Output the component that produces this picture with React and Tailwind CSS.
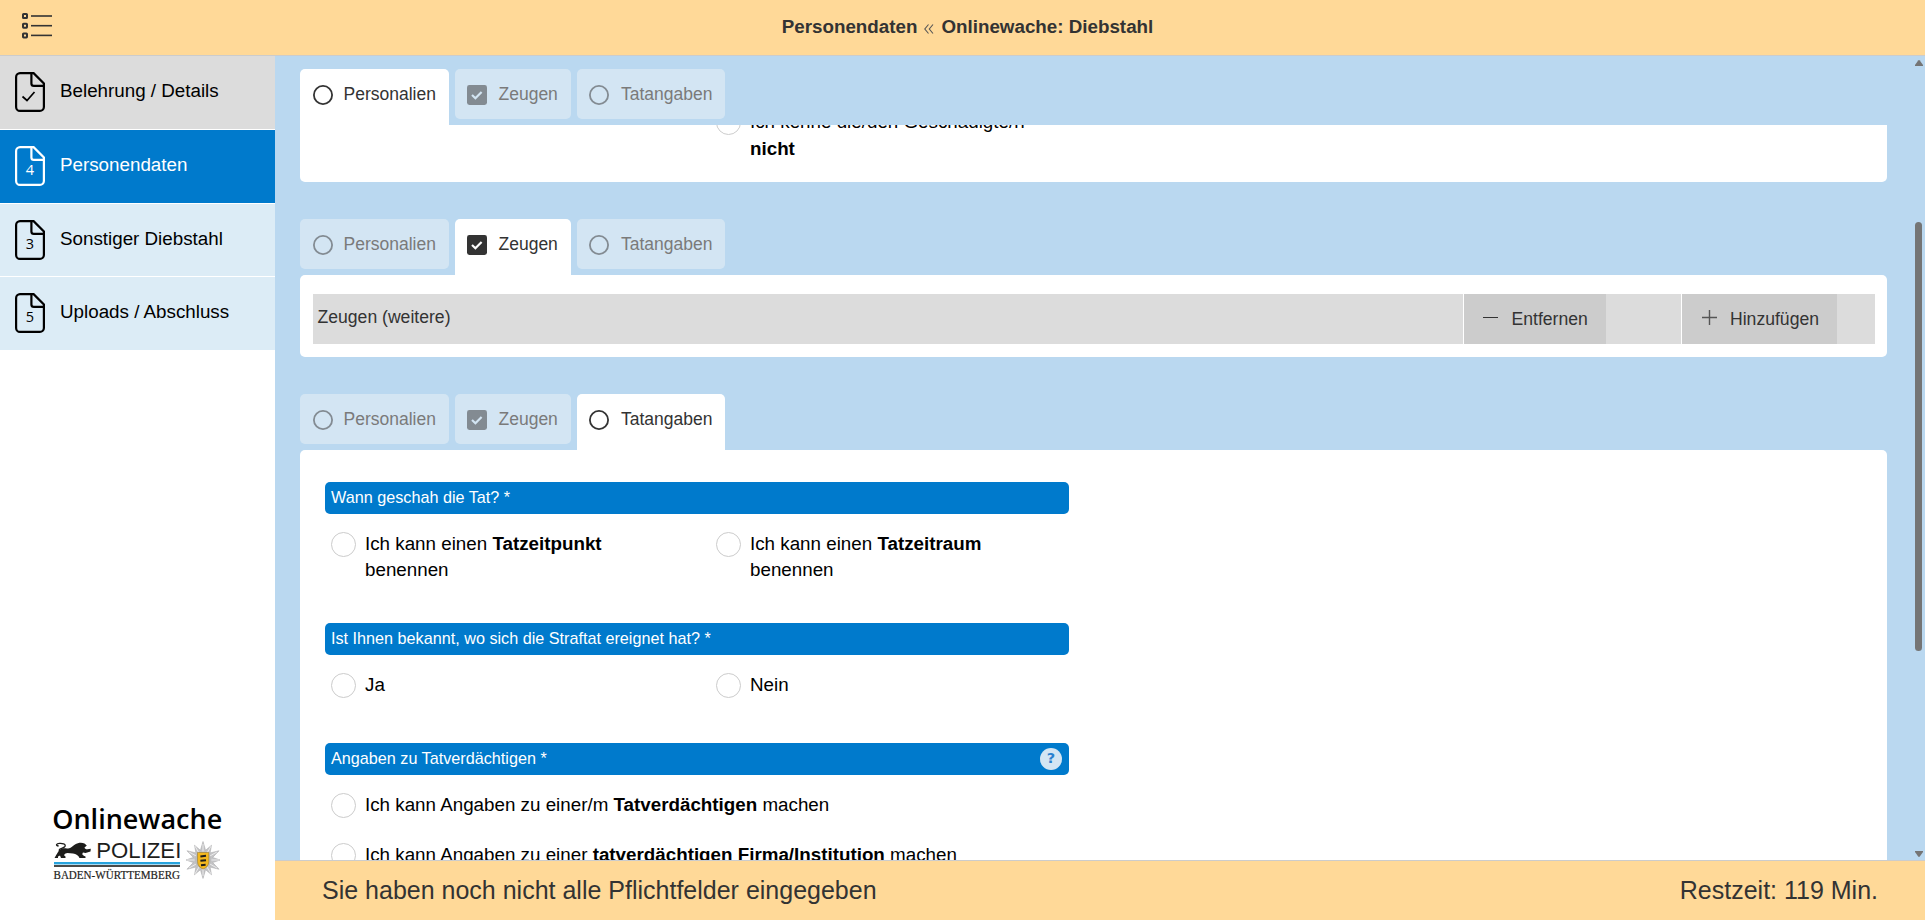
import React from "react";

const ARIAL = "font-['Liberation_Sans',Arial,sans-serif]";

function MenuIcon() {
  return (
    <svg width="32" height="28" viewBox="0 0 32 28" fill="none" stroke="#333" className="block">
      {[4, 13.7, 23.4].map((y) => (
        <g key={y}>
          <rect x="3" y={y - 2} width="4" height="4" rx="0.6" strokeWidth="2" />
          <path d={`M11 ${y}H32`} strokeWidth="1.6" />
        </g>
      ))}
    </svg>
  );
}

function FileIcon({ mark }) {
  return (
    <svg width="30" height="40" viewBox="0 0 30 40" fill="none" stroke="currentColor" strokeWidth="2.2" className="block shrink-0">
      <path d="M5 1.1H18.6L28.9 11.4V35a4 4 0 0 1-4 3.9H5a4 4 0 0 1-3.9-4V5a4 4 0 0 1 3.9-3.9Z" />
      <path d="M16.4 1V11.4a2.4 2.4 0 0 0 2.4 2.4H29" />
      {mark === "check" ? (
        <path d="M7.5 24.5L12 28.5L19.5 20" strokeWidth="1.7" />
      ) : (
        <text x="15" y="29" textAnchor="middle" fill="currentColor" stroke="none" fontSize="14.5" fontFamily="'Open Sans', 'Noto Sans', sans-serif">
          {mark}
        </text>
      )}
    </svg>
  );
}

const NAV = [
  { mark: "check", label: "Belehrung / Details", cls: "h-[74px] bg-[#dcdcdc] text-black border-b" },
  { mark: "4", label: "Personendaten", cls: "h-[74px] bg-[#007acc] text-white border-b" },
  { mark: "3", label: "Sonstiger Diebstahl", cls: "h-[73px] bg-[#dcecf6] text-black border-b" },
  { mark: "5", label: "Uploads / Abschluss", cls: "h-[73px] bg-[#dcecf6] text-black" },
];

function CircleIcon() {
  return (
    <svg width="20" height="20" viewBox="0 0 20 20" className="block shrink-0">
      <circle cx="10" cy="10" r="9.1" fill="none" stroke="currentColor" strokeWidth="1.8" />
    </svg>
  );
}

function CheckedIcon({ active }) {
  return (
    <svg width="20" height="20" viewBox="0 0 20 20" className="block shrink-0">
      <rect width="20" height="20" rx="2.4" fill="currentColor" />
      <path d="M5 10L8.4 13.2L14.6 7" fill="none" stroke={active ? "#fff" : "#d3e5f3"} strokeWidth="2.2" />
    </svg>
  );
}

function Tabs({ active }) {
  const items = [
    { label: "Personalien", w: "w-[149px] pl-[13px]", gap: "gap-[10.5px]" },
    { label: "Zeugen", w: "w-[116px] pl-3", gap: "gap-[11.5px]", checked: true },
    { label: "Tatangaben", w: "w-[148px] pl-3", gap: "gap-[12px]" },
  ];
  return (
    <div className="flex h-[56px] shrink-0 gap-1.5">
      {items.map((t, i) => {
        const on = i === active;
        return (
          <div
            key={t.label}
            className={`flex ${t.w} ${t.gap} ${on ? "h-[56px] rounded-t-[5px] bg-white" : "h-[50px] rounded-[5px] bg-[#d3e5f3]"}`}
          >
            <span className={`mt-4 ${on ? "text-[#333]" : "text-[#838b92]"}`}>
              {t.checked ? <CheckedIcon active={on} /> : <CircleIcon />}
            </span>
            <span className={`mt-[14px] text-[17.5px] leading-[22px] ${on ? "text-[#333]" : "text-[#7a7a7a]"}`}>{t.label}</span>
          </div>
        );
      })}
    </div>
  );
}

function Radio({ children, wide }) {
  return (
    <div className={`flex ${wide ? "w-[738px]" : "w-[385px]"} shrink-0 items-start gap-[9px]`}>
      <span className="h-[25px] w-[25px] shrink-0 rounded-full border border-[#ccc] bg-white" />
      <span className={`${wide ? "" : "w-[290px]"} -mt-px text-[18.8px] leading-[26.3px] text-black`}>{children}</span>
    </div>
  );
}

function Bar({ children, help }) {
  return (
    <div className="flex h-8 items-center justify-between rounded-[5px] bg-[#007acc] pr-[7px] pl-1.5 text-[16.2px] text-white">
      <span className="pb-px">{children}</span>
      {help && (
        <span className="flex h-[22px] w-[22px] items-center justify-center rounded-full bg-[#d3e5f3] font-['DejaVu_Sans',sans-serif] text-[14.5px] font-bold text-[#2a80cf]">
          ?
        </span>
      )}
    </div>
  );
}

function Logo() {
  const rays = Array.from({ length: 24 }, (_, i) => {
    const r = i % 2 === 0 ? (i % 4 === 0 ? 18.5 : 17) : 10;
    const a = (i * Math.PI) / 12 - Math.PI / 2;
    return `${(153 + r * Math.cos(a)).toFixed(2)},${(60 + r * Math.sin(a)).toFixed(2)}`;
  }).join(" ");
  const facets = Array.from({ length: 12 }, (_, i) => {
    const a = (i * Math.PI) / 6 - Math.PI / 2;
    return `M153 60L${(153 + 16 * Math.cos(a)).toFixed(2)} ${(60 + 16 * Math.sin(a)).toFixed(2)}`;
  }).join("");
  return (
    <svg width="180" height="90" viewBox="0 0 180 90" className="block">
      <text x="2.2" y="29" fontFamily="'Open Sans', sans-serif" fontWeight="600" fontSize="26.6" textLength="170" lengthAdjust="spacingAndGlyphs">
        Onlinewache
      </text>
      <path
        fill="#1d1d1b"
        d="M9 50.5C11 48.3 14 48 17 48.4C21 49 22 46.5 25 44.6C28 42.6 32 42.4 34.5 43.6L36.8 45.6L34.5 47.4C34.8 49 36.5 49.8 40.8 48.8L40.5 51.6L35.5 53L33 52.5C32 54 32 55.4 35.5 56.4V58H29.5C28.5 55.5 26 54 23 53.5L17.5 53C14.5 53.5 13 55 15.5 56.6V58H11L10 55.4L8 56.6V58H4.5L6.5 54.5Z"
      />
      <path d="M10 51.5C7 48.5 13.5 48.8 15 46.4C16.2 44 12 43.2 9.5 43.4C6.5 43.6 5 45.4 8.6 46" fill="none" stroke="#1d1d1b" strokeWidth="1.3" />
      <text x="46.3" y="58" fill="#1d1d1b" fontFamily="'Liberation Sans', Arial, sans-serif" fontSize="22.2" textLength="85" lengthAdjust="spacingAndGlyphs">
        POLIZEI
      </text>
      <rect x="4" y="62" width="126" height="2.4" fill="#27a3dd" />
      <rect x="4" y="65" width="126" height="2" fill="#4a4a49" />
      <text x="3.5" y="78.6" fill="#1d1d1b" stroke="#1d1d1b" strokeWidth="0.2" fontFamily="'Liberation Serif', 'Times New Roman', serif" fontSize="11.8" textLength="126.5" lengthAdjust="spacingAndGlyphs">
        BADEN-WÜRTTEMBERG
      </text>
      <polygon points={rays} fill="#c4c4c6" stroke="#a3a3a5" strokeWidth="0.5" />
      <path d={facets} stroke="#efefef" strokeWidth="0.9" />
      <circle cx="153" cy="60" r="8.4" fill="#bdbdbe" />
      <path d="M147.5 52.5H158.8V61.5C158.8 65.5 156.2 68 153.1 69C150 68 147.5 65.5 147.5 61.5Z" fill="#f3b81f" stroke="#8a6f2a" strokeWidth="0.5" />
      <path d="M150.4 56.4L156 55.8M150.4 60.8L156 60.2M151 65.2L155.6 64.8" stroke="#1d1d1b" strokeWidth="2" />
    </svg>
  );
}

export default function App() {
  return (
    <div className={`flex h-[920px] w-[1925px] flex-col overflow-hidden bg-white ${ARIAL}`}>
      <header className="grid h-[56px] shrink-0 grid-cols-[200px_1fr_200px] border-b border-[#ccc] bg-[#ffd998]">
        <div className="pt-3 pl-5">
          <MenuIcon />
        </div>
        <h1 className="flex items-center justify-center gap-[7px] pb-px pl-[10px] text-[18.8px] font-bold text-[#333]">
          <span>Personendaten</span>
          <svg width="10" height="10" viewBox="0 0 10 10" fill="none" stroke="#555" strokeWidth="1.1" className="mt-[3px] block">
            <path d="M4.5 0.5L0.8 5L4.5 9.5M9 0.5L5.3 5L9 9.5" />
          </svg>
          <span>Onlinewache: Diebstahl</span>
        </h1>
      </header>

      <div className="flex min-h-0 flex-1">
        <aside className="flex w-[275px] shrink-0 flex-col justify-between bg-white">
          <nav>
            {NAV.map((n) => (
              <div key={n.label} className={`flex gap-[15px] border-white pt-4 pl-[15px] ${n.cls}`}>
                <FileIcon mark={n.mark} />
                <span className="mt-[7px] text-[18.8px] leading-[24px]">{n.label}</span>
              </div>
            ))}
          </nav>
          <div className="pb-[30px] pl-[50px]">
            <Logo />
          </div>
        </aside>

        <div className="flex min-w-0 flex-1 flex-col">
          <div className="flex min-h-0 flex-1 bg-[#bad8f0]">
            <main className="flex w-[1612px] shrink-0 flex-col overflow-hidden pt-[13px] pl-[25px]">
              <Tabs active={0} />
              <section className="flex h-[57px] shrink-0 items-end overflow-hidden rounded-b-[5px] bg-white pb-[20px] pl-[416px]">
                <Radio>
                  Ich kenne die/den Geschädigte/n <b>nicht</b>
                </Radio>
              </section>

              <div className="h-[37px] shrink-0" />
              <Tabs active={1} />
              <section className="h-[82px] shrink-0 rounded-[5px] bg-white pt-[19px] pr-3 pl-[13px] text-[17.6px] text-[#333]">
                <div className="grid h-[50px] grid-cols-[1150px_217px_193px] gap-px">
                  <div className="bg-[#dcdcdc] pt-3 pl-[4.5px] leading-[22px]">Zeugen (weitere)</div>
                  <div className="bg-[#dcdcdc]">
                    <button className="flex h-[50px] w-[142px] bg-[#ccc] pt-[14px] pl-[19px] leading-[22px]">
                      <svg width="15" height="16" viewBox="0 0 15 16" stroke="#333" className="mt-[2px] mr-[13.5px] block">
                        <path d="M0 7.5H15" />
                      </svg>
                      Entfernen
                    </button>
                  </div>
                  <div className="bg-[#dcdcdc]">
                    <button className="flex h-[50px] w-[155px] bg-[#ccc] pt-[14px] pl-[19.5px] leading-[22px]">
                      <svg width="15" height="16" viewBox="0 0 15 16" stroke="#555" strokeWidth="1.4" className="mt-[2px] mr-[13.5px] block">
                        <path d="M0 7.5H15M7.5 0V15" />
                      </svg>
                      Hinzufügen
                    </button>
                  </div>
                </div>
              </section>

              <div className="h-[37px] shrink-0" />
              <Tabs active={2} />
              <section className="min-h-0 flex-1 overflow-hidden rounded-t-[5px] bg-white pt-8 pl-[25px]">
                <div className="w-[744px]">
                  <div className="h-[141px]">
                    <Bar>Wann geschah die Tat? *</Bar>
                    <div className="flex pt-[18px] pl-1.5">
                      <Radio>
                        Ich kann einen <b>Tatzeitpunkt</b> benennen
                      </Radio>
                      <Radio>
                        Ich kann einen <b>Tatzeitraum</b> benennen
                      </Radio>
                    </div>
                  </div>
                  <div className="h-[120px]">
                    <Bar>Ist Ihnen bekannt, wo sich die Straftat ereignet hat? *</Bar>
                    <div className="flex pt-[18px] pl-1.5">
                      <Radio>Ja</Radio>
                      <Radio>Nein</Radio>
                    </div>
                  </div>
                  <div>
                    <Bar help>Angaben zu Tatverdächtigen *</Bar>
                    <div className="flex flex-col gap-[24.7px] pt-[18px] pl-1.5">
                      <Radio wide>
                        Ich kann Angaben zu einer/m <b>Tatverdächtigen</b> machen
                      </Radio>
                      <Radio wide>
                        Ich kann Angaben zu einer <b>tatverdächtigen Firma/Institution</b> machen
                      </Radio>
                    </div>
                  </div>
                </div>
              </section>
            </main>
            <div className="flex flex-1 flex-col items-end pr-[2.5px]">
              <svg width="8" height="6" viewBox="0 0 8 6" fill="#757575" className="mt-1 block shrink-0">
                <path d="M0 6V5L3.2 0.4Q4 -0.4 4.8 0.4L8 5V6Z" />
              </svg>
              <div className="mt-[156px] mr-[0.5px] h-[429px] w-[7px] shrink-0 rounded-full bg-[#757575]" />
              <div className="flex-1" />
              <svg width="8" height="6" viewBox="0 0 8 6" fill="#757575" className="mb-[3px] block shrink-0">
                <path d="M0 0V1L3.2 5.6Q4 6.4 4.8 5.6L8 1V0Z" />
              </svg>
            </div>
          </div>
          <footer className="flex h-[60px] shrink-0 items-center justify-between border-t border-[#ccc] bg-[#ffd998] pr-[47px] pl-[47px] text-[25px] text-[#333]">
            <span>Sie haben noch nicht alle Pflichtfelder eingegeben</span>
            <span>Restzeit: 119 Min.</span>
          </footer>
        </div>
      </div>
    </div>
  );
}
